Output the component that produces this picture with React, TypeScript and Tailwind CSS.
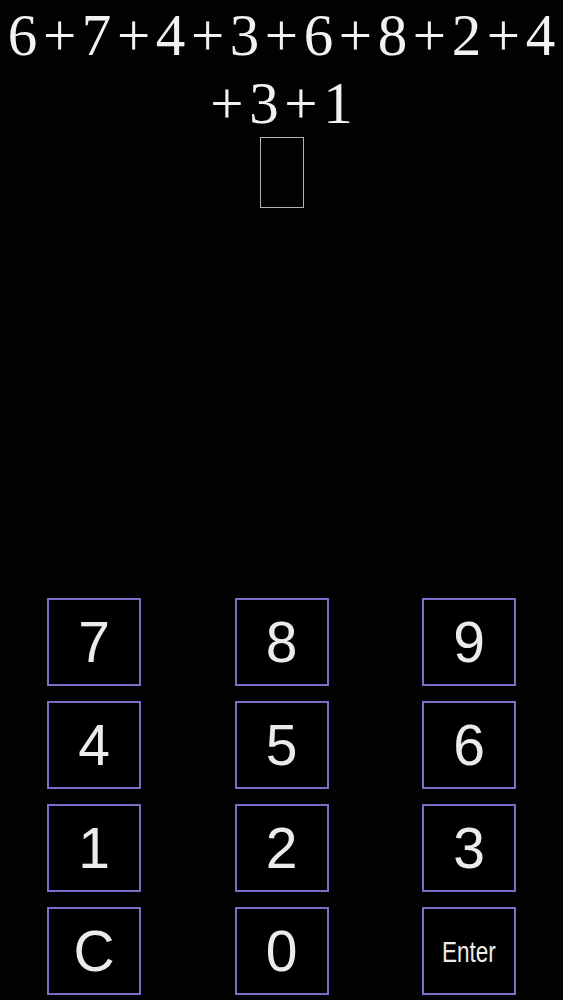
const topLine = ['6', '+', '7', '+', '4', '+', '3', '+', '6', '+', '8', '+', '2', '+', '4'];
const secondLine = ['+', '3', '+', '1'];

const keys = ['7', '8', '9', '4', '5', '6', '1', '2', '3', 'C', '0', 'Enter'];

function Tokens({ items }: { items: string[] }) {
  return (
    <div className="flex justify-center gap-[5.6px] h-[68px] leading-[68px]">
      {items.map((t, i) => (
        <span key={i}>{t}</span>
      ))}
    </div>
  );
}

export default function App() {
  return (
    <div className="h-screen w-full bg-[#020202] flex flex-col overflow-hidden">
      {/* Ecuación */}
      <div
        className="pt-px text-[59px] text-[#f2f2f2]"
        style={{ fontFamily: '"Liberation Serif", "Times New Roman", serif' }}
      >
        <Tokens items={topLine} />
        <Tokens items={secondLine} />
      </div>

      {/* Casilla de respuesta */}
      <div className="flex justify-center">
        <div className="w-[44px] h-[71px] ml-[1px] border-[1.5px] border-[#b4b4b4]" />
      </div>

      {/* Teclado */}
      <div
        className="mt-auto px-[47px] pb-[5px] grid grid-cols-3 gap-y-[15px] justify-between"
        style={{ gridTemplateColumns: 'repeat(3, 94px)', fontFamily: '"Liberation Sans", Arial, sans-serif' }}
      >
        {keys.map((k) => (
          <button
            key={k}
            className="w-[94px] h-[88px] border-2 border-[#7a6ec6] bg-black text-[#ebebeb] flex items-center justify-center"
          >
            {k === 'Enter' ? (
              <span className="inline-block text-[30px] scale-x-[0.75]">Enter</span>
            ) : (
              <span className="text-[57px] leading-none">{k}</span>
            )}
          </button>
        ))}
      </div>
    </div>
  );
}
